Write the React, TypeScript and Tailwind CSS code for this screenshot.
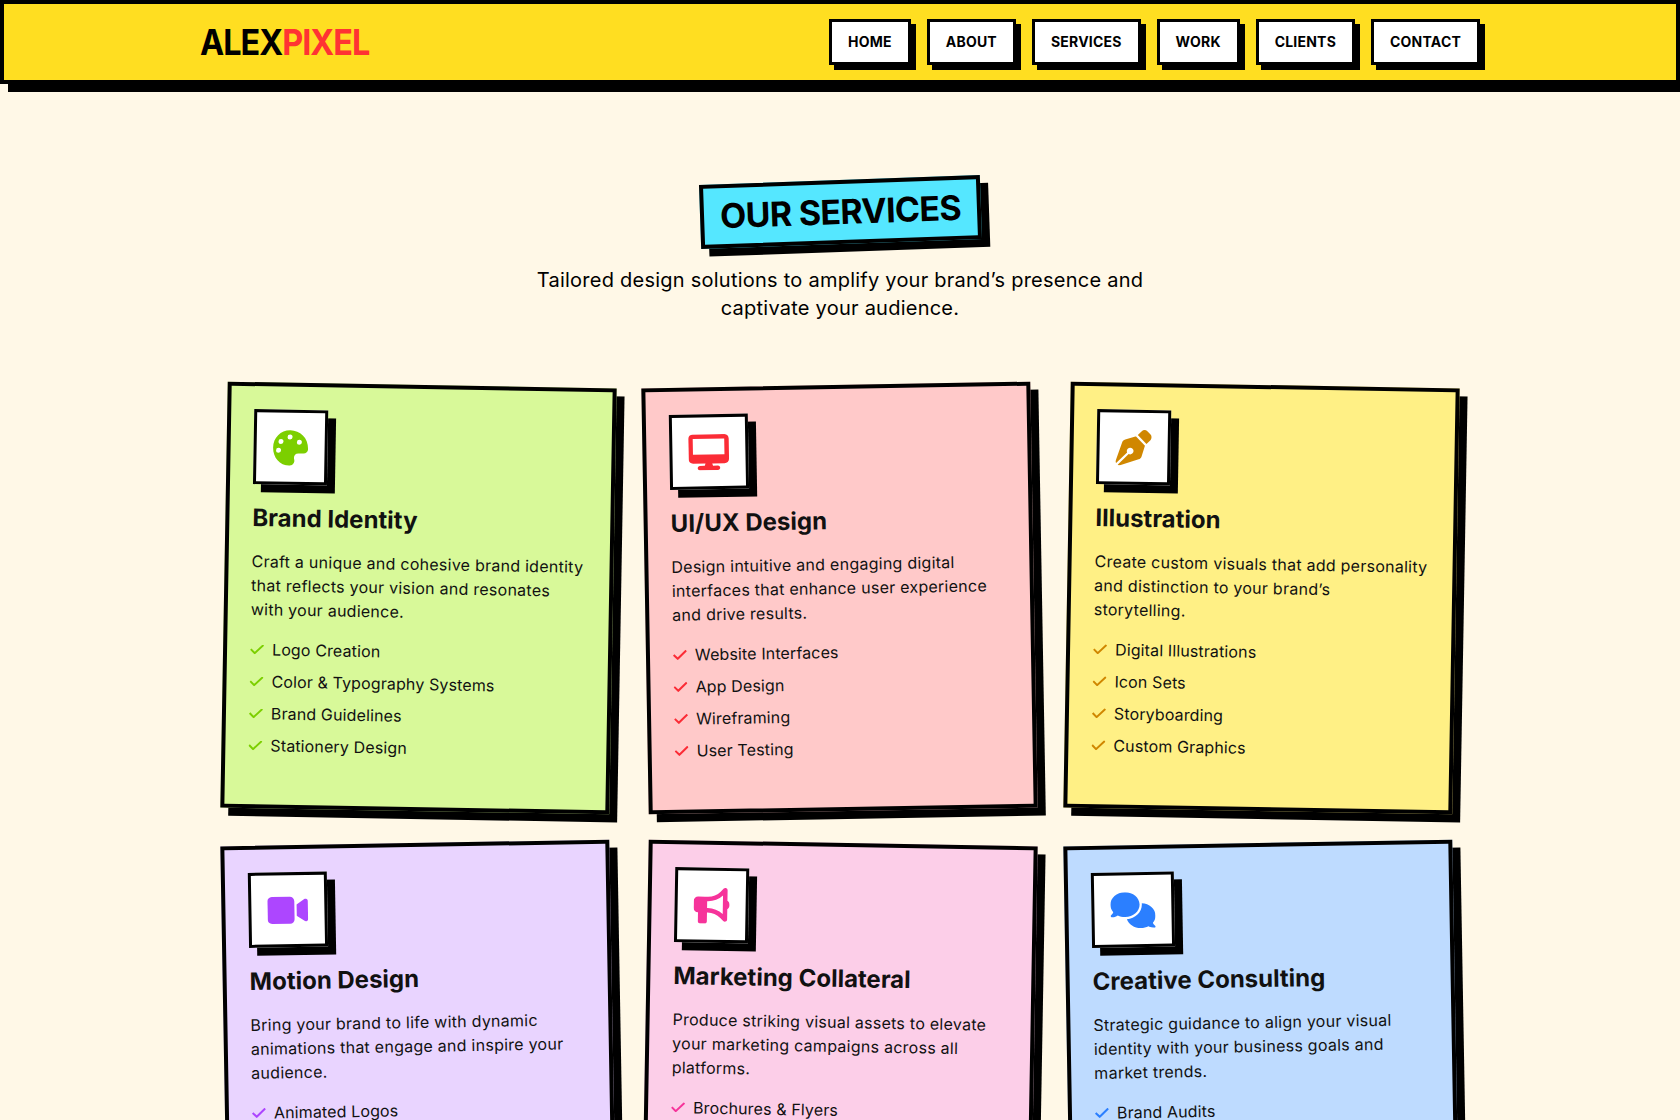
import type { ComponentType } from 'react'
import { FaBullhorn, FaComments, FaDesktop, FaPenNib, FaVideo } from 'react-icons/fa6'

type Service = {
  title: string
  text: string
  items: string[]
  Icon: ComponentType<{ className?: string }>
  cardClass: string
  iconClass: string
  color: string
}

const navLinks = ['HOME', 'ABOUT', 'SERVICES', 'WORK', 'CLIENTS', 'CONTACT']

// four dots and a bite on the right, none of the icon packs has this one
function PaletteIcon({ className }: { className?: string }) {
  return (
    <svg viewBox="0 0 36 36" className={className}>
      <path
        fill="currentColor"
        d="M17.5 0.5C27 0.5 35.5 7.5 35.5 19C35.5 22 33.5 23.5 31 23.5L26 23.5C23 23.5 21.5 25.5 21.5 28C21.5 29 22 30 22 31C22 34 19.5 36 17 36C7.5 36 0.5 28 0.5 18C0.5 8 8 0.5 17.5 0.5Z"
      />
      <circle cx="8.3" cy="12" r="2.5" fill="#fff" />
      <circle cx="17.3" cy="7.3" r="2.5" fill="#fff" />
      <circle cx="26.7" cy="12.3" r="2.5" fill="#fff" />
      <circle cx="6" cy="20.7" r="2.5" fill="#fff" />
    </svg>
  )
}

const services: Service[] = [
  {
    title: 'Brand Identity',
    text: 'Craft a unique and cohesive brand identity that reflects your vision and resonates with your audience.',
    items: ['Logo Creation', 'Color & Typography Systems', 'Brand Guidelines', 'Stationery Design'],
    Icon: PaletteIcon,
    cardClass: 'bg-lime-200 rotate-1',
    iconClass: 'w-9 h-9',
    color: 'text-lime-500',
  },
  {
    title: 'UI/UX Design',
    text: 'Design intuitive and engaging digital interfaces that enhance user experience and drive results.',
    items: ['Website Interfaces', 'App Design', 'Wireframing', 'User Testing'],
    Icon: FaDesktop,
    cardClass: 'bg-red-200 -rotate-1',
    iconClass: 'w-[40.5px] h-9',
    color: 'text-red-500',
  },
  {
    title: 'Illustration',
    // keeps the reference's line break, this font runs a bit narrower
    text: 'Create custom visuals that add personality and distinction to your brand’s\nstorytelling.',
    items: ['Digital Illustrations', 'Icon Sets', 'Storyboarding', 'Custom Graphics'],
    Icon: FaPenNib,
    cardClass: 'bg-yellow-200 rotate-1',
    iconClass: 'w-9 h-9',
    color: 'text-yellow-600',
  },
  {
    title: 'Motion Design',
    text: 'Bring your brand to life with dynamic animations that engage and inspire your audience.',
    items: ['Animated Logos'],
    Icon: FaVideo,
    cardClass: 'bg-purple-200 -rotate-1',
    iconClass: 'w-[40.5px] h-9',
    color: 'text-purple-500',
  },
  {
    title: 'Marketing Collateral',
    text: 'Produce striking visual assets to elevate your marketing campaigns across all platforms.',
    items: ['Brochures & Flyers'],
    Icon: FaBullhorn,
    cardClass: 'bg-pink-200 rotate-1',
    iconClass: 'w-9 h-9',
    color: 'text-pink-500',
  },
  {
    title: 'Creative Consulting',
    text: 'Strategic guidance to align your visual identity with your business goals and market trends.',
    items: ['Brand Audits'],
    Icon: FaComments,
    cardClass: 'bg-blue-200 -rotate-1',
    iconClass: 'w-[45px] h-9',
    color: 'text-blue-500',
  },
]

function Tick() {
  return (
    <svg viewBox="0 0 14 10" fill="none" className="mr-2 h-[10px] w-[14px] shrink-0">
      <path d="M0.7 5l4 4L13.3 0.8" stroke="currentColor" strokeWidth="2" />
    </svg>
  )
}

function ServiceCard({ service }: { service: Service }) {
  const { Icon } = service
  return (
    <div
      className={`min-h-[426px] border-4 border-black p-6 pt-[23px] pl-[23px] text-[#111] shadow-[8px_8px_0_#000] ${service.cardClass}`}
    >
      <div className="mb-3 inline-block border-[3px] border-black bg-white px-4 py-[16.5px] shadow-[8px_8px_0_#000]">
        <Icon className={`block ${service.iconClass} ${service.color}`} />
      </div>
      <h3 className="mb-[15px] text-2xl font-bold">{service.title}</h3>
      <p className="mb-4 text-base tracking-[0.016em] whitespace-pre-line">{service.text}</p>
      <ul className="space-y-2">
        {service.items.map((item) => (
          <li key={item} className="flex items-center text-base tracking-[0.008em]">
            <span className={service.color}>
              <Tick />
            </span>
            {item}
          </li>
        ))}
      </ul>
    </div>
  )
}

export default function App() {
  return (
    <div className="h-[1120px] overflow-hidden bg-[#fff8e7] font-['Inter',sans-serif] text-black">
      <header className="border-4 border-black bg-[#ffde21] shadow-[8px_8px_0_#000]">
        <div className="mx-auto flex h-[76px] max-w-[1280px] items-center justify-between">
          <div className="origin-left scale-x-90 text-4xl font-bold tracking-[-0.03em]">
            ALEX<span className="text-[#ff3333]">PIXEL</span>
          </div>
          <nav className="flex gap-4">
            {navLinks.map((link) => (
              <a
                key={link}
                href="#"
                className="border-[3px] border-black bg-white px-4 py-2 text-sm leading-6 font-bold tracking-[0.015em] shadow-[5px_5px_0_#000]"
              >
                {link}
              </a>
            ))}
          </nav>
        </div>
      </header>

      <main className="mx-auto max-w-[1280px] px-6 pt-24">
        <div className="mb-[63px] text-center">
          <h2 className="mb-[22px] inline-block -rotate-2 border-4 border-black bg-[#55e7ff] px-4 py-2 text-[34px] leading-10 font-bold tracking-[-0.02em] shadow-[8px_8px_0_#000]">
            OUR SERVICES
          </h2>
          <p className="mx-auto max-w-[672px] text-xl tracking-[0.012em]">
            Tailored design solutions to amplify your brand’s presence and captivate your audience.
          </p>
        </div>

        <div className="grid grid-cols-3 gap-8">
          {services.map((service) => (
            <ServiceCard key={service.title} service={service} />
          ))}
        </div>
      </main>
    </div>
  )
}
